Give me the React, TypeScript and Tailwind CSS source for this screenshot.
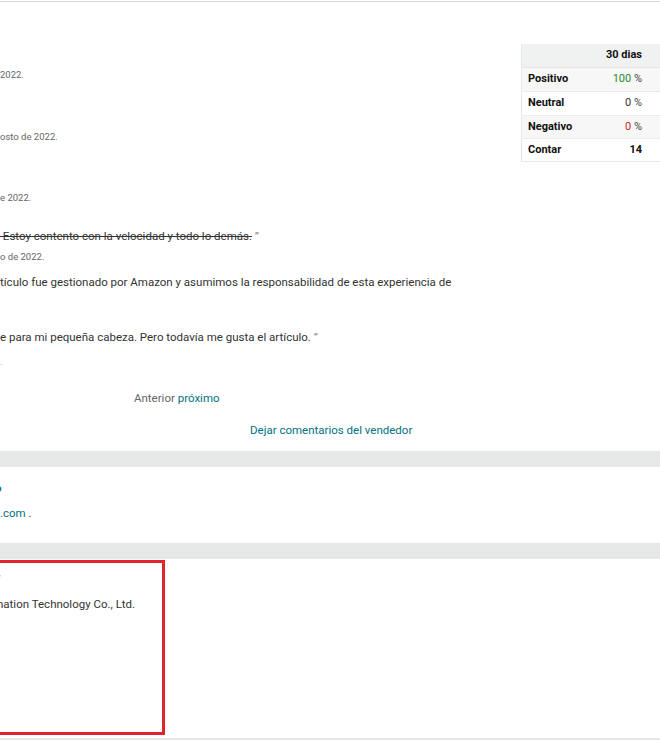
import React from "react";

const rows = [
  { label: "Positivo", value: "100", tone: "text-[#2a8a2a]", bg: "bg-[#f7f7f7]" },
  { label: "Neutral", value: "0", tone: "text-[#333]", bg: "bg-white" },
  { label: "Negativo", value: "0", tone: "text-[#c8252c]", bg: "bg-[#f7f7f7]" },
];

function StatsTable() {
  return (
    <div className="mt-[42px] w-[139px] shrink-0 self-start border-l border-b border-[#e7e7e7] text-[11px] text-[#111]">
      <div className="flex h-6 items-center justify-end border-b border-[#e7e7e7] bg-[#f0f2f2] pr-[18px] font-bold">
        30 dias
      </div>
      {rows.map((r, i) => (
        <div
          key={r.label}
          className={`flex items-center justify-between border-b border-[#ececec] pl-[6px] pr-[18px] ${r.bg} ${
            i === 2 ? "h-[23px]" : "h-6"
          }`}
        >
          <span className="font-bold">{r.label}</span>
          <span>
            <span className={r.tone}>{r.value}</span> <span className="text-[#444]">%</span>
          </span>
        </div>
      ))}
      <div className="flex h-[22px] items-center justify-between pl-[6px] pr-[18px]">
        <span className="font-bold">Contar</span>
        <span className="font-bold">14</span>
      </div>
    </div>
  );
}

export default function App() {
  return (
    <div
      className="h-[740px] w-[660px] overflow-hidden bg-white text-[#333]"
      style={{ fontFamily: "Roboto, 'Liberation Sans', sans-serif" }}
    >
      <div className="mt-px h-px bg-[#dadada]" />
      <div className="flex">
        <div className="flex-1 text-[11.5px] leading-4">
          <div className="mt-[65px] h-4 text-[9.5px] text-[#666]">2022.</div>
          <div className="mt-[46px] h-4 text-[9.5px] text-[#666]">osto de 2022.</div>
          <div className="mt-[45px] h-4 text-[9.5px] text-[#666]">e 2022.</div>
          <div className="mt-[22px] h-4 whitespace-nowrap">
            <span className="line-through">{"\u00a0Estoy contento con la velocidad y todo lo demás."}</span>
            <span className="text-[#888]"> ”</span>
          </div>
          <div className="mt-[5px] h-4 text-[9.5px] text-[#666]">o de 2022.</div>
          <div className="mt-[9px] h-4 whitespace-nowrap">
            tículo fue gestionado por Amazon y asumimos la responsabilidad de esta experiencia de
          </div>
          <div className="mt-[39px] h-4 whitespace-nowrap">
            e para mi pequeña cabeza. Pero todavía me gusta el artículo.
            <span className="text-[#888]"> ”</span>
          </div>
          <div className="mt-[9px] h-4 text-[9px] text-[#aaa]">.</div>
          <div className="mt-[20px] h-4 pl-[134px]">
            <span className="text-[#666]">Anterior</span> <span className="text-[#007185]">próximo</span>
          </div>
        </div>
        <StatsTable />
      </div>

      <div className="mt-4 h-4 pl-[250px] text-[11.5px] leading-4 text-[#007185]">
        Dejar comentarios del vendedor
      </div>

      <div className="mt-[13px] h-4 bg-[#e6e8e8]" />

      <div className="h-[76px] pt-[13px] text-[11.5px] leading-4">
        <div className="h-4 -ml-[5px] font-bold text-[#1d6f7e]">o</div>
        <div className="mt-[9px] h-4">
          <span className="text-[#007185]">.com</span> .
        </div>
      </div>

      <div className="h-4 bg-[#e6e8e8]" />

      <div className="mt-px h-[175px] w-[165px] border-y-[3px] border-r-[3px] border-[#e0232e] pt-[6px] text-[11.5px] leading-4">
        <div className="h-4 -ml-[4px] font-bold">r</div>
        <div className="mt-[11px] h-4 -ml-[3px] whitespace-nowrap">nation Technology Co., Ltd.</div>
      </div>

      <div className="mt-[3px] h-[4px] bg-[#e6e8e8]" />
    </div>
  );
}
